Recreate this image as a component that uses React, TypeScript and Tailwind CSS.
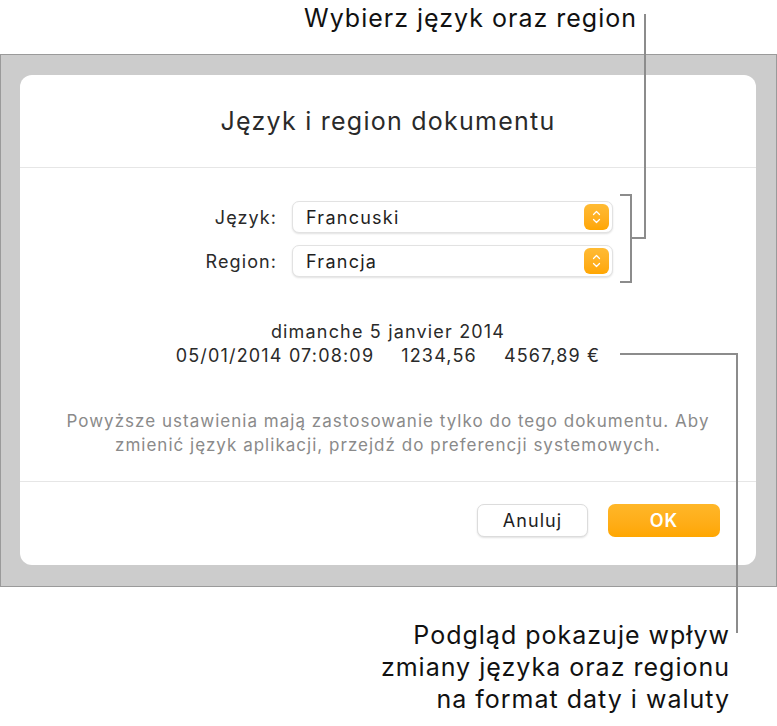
import { ChevronUp, ChevronDown } from 'lucide-react'

const font = { fontFamily: 'Inter, "Noto Sans", sans-serif' }

function Stepper() {
    return (
        <div className="w-[25px] h-[26px] rounded-[6px] bg-gradient-to-b from-[#ffbb33] to-[#ffa600] flex flex-col items-center justify-center text-white">
            <ChevronUp className="w-[15px] h-[12px] -mb-[2px]" strokeWidth={2.5} />
            <ChevronDown className="w-[15px] h-[12px] -mt-[2px]" strokeWidth={2.5} />
        </div>
    )
}

function Select({ value }: { value: string }) {
    return (
        <div className="w-[321px] h-[32px] rounded-[7px] bg-white border border-[#e2e2e2] shadow-[0_1px_2px_rgba(0,0,0,0.12)] flex items-center justify-between pl-[13px] pr-[3px]">
            <span className="text-[18px] tracking-[0.07em] text-[#1e1e1e]">{value}</span>
            <Stepper />
        </div>
    )
}

export default function App() {
    return (
        <div className="relative w-[777px] h-[726px] bg-white overflow-hidden" style={font}>
            {/* top callout */}
            <div className="h-[54px] pr-[140px] pt-[2px] text-right text-[25px] tracking-[0.04em] leading-[32px] text-[#111]">
                Wybierz język oraz region
            </div>

            {/* dialog backdrop */}
            <div className="h-[533px] border border-[#9a9a9a] bg-[#cccccc] pl-[19px] pt-[20px]">
                <div className="w-[736px] h-[490px] rounded-[12px] bg-white flex flex-col">
                    <div className="h-[93px] flex items-center justify-center border-b border-[#e6e6e6]">
                        <span className="text-[25px] tracking-[0.05em] text-[#2a2a2a] mt-[2px]">Język i region dokumentu</span>
                    </div>

                    <div className="pt-[33px] flex flex-col gap-[12px]">
                        <div className="flex items-center">
                            <span className="w-[257px] text-right text-[18px] tracking-[0.06em] text-[#2a2a2a]">Język:</span>
                            <div className="ml-[15px]"><Select value="Francuski" /></div>
                        </div>
                        <div className="flex items-center">
                            <span className="w-[257px] text-right text-[18px] tracking-[0.06em] text-[#2a2a2a]">Region:</span>
                            <div className="ml-[15px]"><Select value="Francja" /></div>
                        </div>
                    </div>

                    <div className="pt-[43px] flex flex-col items-center text-[18px] tracking-[0.065em] leading-[24px] text-[#2a2a2a]">
                        <span>dimanche 5 janvier 2014</span>
                        <div className="flex gap-[27px]">
                            <span>05/01/2014 07:08:09</span>
                            <span>1234,56</span>
                            <span>4567,89 €</span>
                        </div>
                    </div>

                    <div className="pt-[41px] pb-[24px] text-center text-[17px] tracking-[0.06em] leading-[24px] text-[#8a8a8a] border-b border-[#e6e6e6]">
                        <p>Powyższe ustawienia mają zastosowanie tylko do tego dokumentu. Aby</p>
                        <p>zmienić język aplikacji, przejdź do preferencji systemowych.</p>
                    </div>

                    <div className="flex justify-end gap-[20px] pr-[36px] pt-[22px]">
                        <button className="w-[111px] h-[33px] rounded-[7px] bg-white border border-[#dcdcdc] shadow-[0_1px_2px_rgba(0,0,0,0.12)] text-[18px] tracking-[0.06em] text-[#1e1e1e]">
                            Anuluj
                        </button>
                        <button className="w-[112px] h-[33px] rounded-[7px] bg-gradient-to-b from-[#ffb728] to-[#ffa600] text-[18px] tracking-[0.05em] font-semibold text-white">
                            OK
                        </button>
                    </div>
                </div>
            </div>

            {/* bottom callout */}
            <div className="pt-[32px] pr-[47px] text-right text-[25px] tracking-[0.04em] leading-[32px] text-[#111]">
                <p>Podgląd pokazuje wpływ</p>
                <p>zmiany języka oraz regionu</p>
                <p>na format daty i waluty</p>
            </div>

            {/* callout lines */}
            <svg className="absolute inset-0 pointer-events-none" width="777" height="726" fill="none" stroke="#8c8c8c" strokeWidth="2">
                <path d="M645 14 V238 H631" />
                <path d="M620 195 H631 V282 H620" />
                <path d="M620 354 H737 V633" />
            </svg>
        </div>
    )
}
